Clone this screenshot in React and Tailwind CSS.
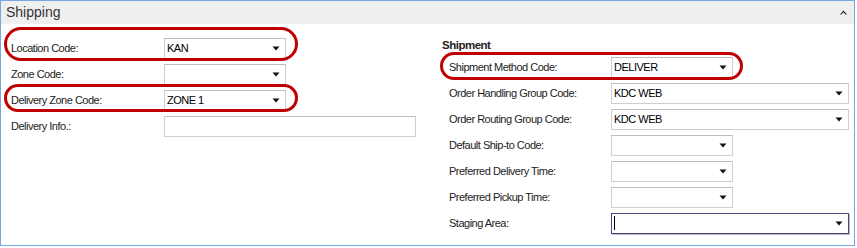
import React from "react";

const Caret = () => (
  <svg width="8" height="5" viewBox="0 0 8 5" className="shrink-0">
    <path d="M0.5 0.5 H7.5 L4 4.5 Z" fill="#111" />
  </svg>
);

const Dropdown = ({ value = "", width = "w-[122px]", focused = false }) => (
  <div
    className={`flex items-center justify-between h-[21px] ${width} bg-white border pl-[2px] pr-[5px] ${
      focused ? "border-[#4a4a7a] shadow-[1px_1px_0_#b8b8c8]" : "border-[#cfcfcf] border-t-[#bdbdbd]"
    }`}
  >
    <span className="text-[11px] text-black leading-none">
      {focused ? <span className="inline-block w-px h-[14px] bg-black align-middle" /> : value}
    </span>
    <Caret />
  </div>
);

const Row = ({ label, labelWidth, children, ring }) => (
  <div className="relative flex items-center h-[26px]">
    {ring && (
      <div className={`absolute border-[3px] border-[#c00000] rounded-full pointer-events-none ${ring}`} />
    )}
    <div className={`${labelWidth} shrink-0 text-[11px] text-[#222]`}>{label}</div>
    {children}
  </div>
);

export default function App() {
  return (
    <div className="w-[855px] h-[246px] border border-[#78a6e4] bg-white font-['Liberation_Sans',sans-serif] tracking-[-0.5px]">
      <div className="flex items-center justify-between h-[23px] bg-[#efefef] pl-[5px] pr-[7px]">
        <span className="text-[14px] tracking-normal text-[#333]">Shipping</span>
        <svg width="7" height="5" viewBox="0 0 7 5">
          <path d="M0 4.5 L3.5 0.5 L7 4.5 L5.6 4.5 L3.5 2.2 L1.4 4.5 Z" fill="#222" />
        </svg>
      </div>
      <div className="flex">
        <div className="w-[441px] pl-[10px] pt-[11px]">
          <Row label="Location Code:" labelWidth="w-[153px]" ring="left-[-7px] top-[-8px] w-[294px] h-[34px]">
            <Dropdown value="KAN" />
          </Row>
          <Row label="Zone Code:" labelWidth="w-[153px]">
            <Dropdown />
          </Row>
          <Row label="Delivery Zone Code:" labelWidth="w-[153px]" ring="left-[-7px] top-[-3px] w-[294px] h-[28px]">
            <Dropdown value="ZONE 1" />
          </Row>
          <Row label="Delivery Info.:" labelWidth="w-[153px]">
            <div className="h-[21px] w-[252px] border border-[#cfcfcf] border-t-[#bdbdbd] bg-white" />
          </Row>
        </div>
        <div className="flex-1 pt-[13px]">
          <div className="h-[17px] text-[11.5px] font-bold text-[#222]">Shipment</div>
          <div className="pl-[7px]">
            <Row label="Shipment Method Code:" labelWidth="w-[162px]" ring="left-[-9px] top-[-2px] w-[303px] h-[28px]">
              <Dropdown value="DELIVER" />
            </Row>
            <Row label="Order Handling Group Code:" labelWidth="w-[162px]">
              <Dropdown value="KDC WEB" width="w-[238px]" />
            </Row>
            <Row label="Order Routing Group Code:" labelWidth="w-[162px]">
              <Dropdown value="KDC WEB" width="w-[238px]" />
            </Row>
            <Row label="Default Ship-to Code:" labelWidth="w-[162px]">
              <Dropdown />
            </Row>
            <Row label="Preferred Delivery Time:" labelWidth="w-[162px]">
              <Dropdown />
            </Row>
            <Row label="Preferred Pickup Time:" labelWidth="w-[162px]">
              <Dropdown />
            </Row>
            <Row label="Staging Area:" labelWidth="w-[162px]">
              <Dropdown width="w-[238px]" focused />
            </Row>
          </div>
        </div>
      </div>
    </div>
  );
}
